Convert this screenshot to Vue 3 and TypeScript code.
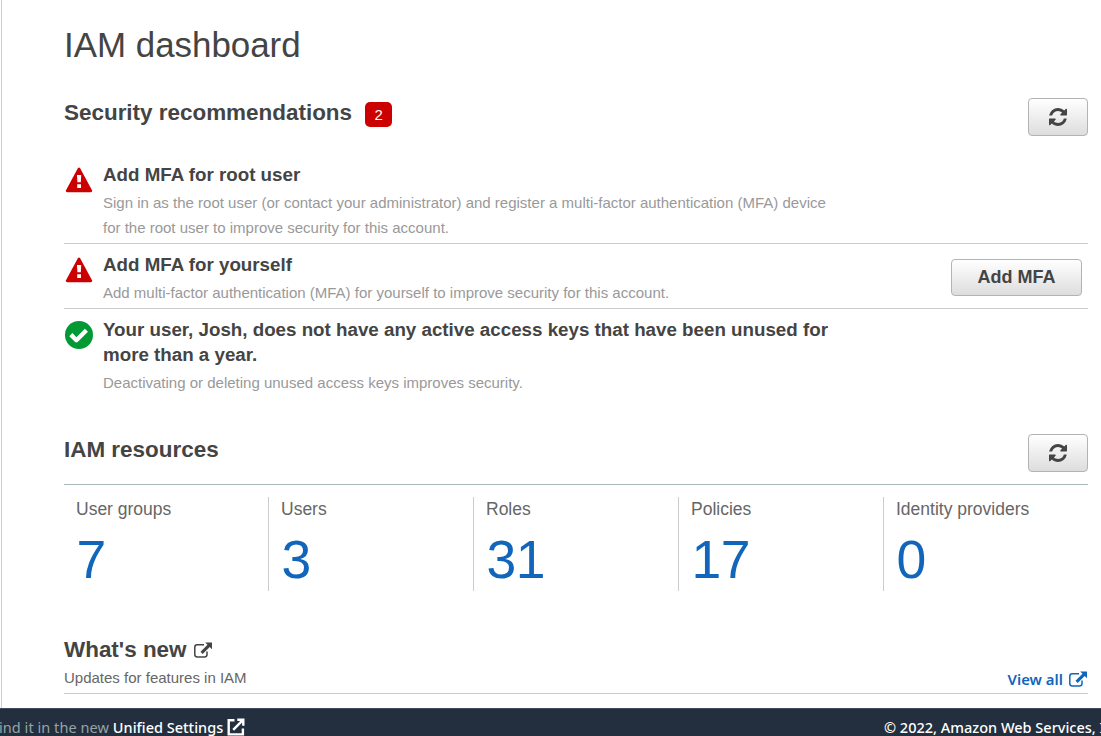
<script setup lang="ts">
interface Recommendation {
  status: 'alert' | 'ok'
  title: string
  description: string
  action?: string
}

interface Resource {
  label: string
  count: number
}

const recommendations: Recommendation[] = [
  {
    status: 'alert',
    title: 'Add MFA for root user',
    description:
      'Sign in as the root user (or contact your administrator) and register a multi-factor authentication (MFA) device for the root user to improve security for this account.',
  },
  {
    status: 'alert',
    title: 'Add MFA for yourself',
    description: 'Add multi-factor authentication (MFA) for yourself to improve security for this account.',
    action: 'Add MFA',
  },
  {
    status: 'ok',
    title: 'Your user, Josh, does not have any active access keys that have been unused for more than a year.',
    description: 'Deactivating or deleting unused access keys improves security.',
  },
]

const resources: Resource[] = [
  { label: 'User groups', count: 7 },
  { label: 'Users', count: 3 },
  { label: 'Roles', count: 31 },
  { label: 'Policies', count: 17 },
  { label: 'Identity providers', count: 0 },
]
</script>

<template>
  <div class="page">
    <main class="content">
      <h1 class="title">IAM dashboard</h1>

      <header class="section-head">
        <h2>Security recommendations</h2>
        <span class="count-badge">2</span>
        <button class="btn refresh" aria-label="Refresh">
          <svg viewBox="0 0 1536 1536" width="18" height="18">
            <path fill="#444" d="M1511 928q0 5-1 7-64 268-268 434.500T764 1536q-146 0-282.500-55T238 1324l-129 129q-19 19-45 19t-45-19-19-45V960q0-26 19-45t45-19h448q26 0 45 19t19 45-19 45l-137 137q71 66 161 102t187 36q134 0 250-65t186-179q11-17 53-117 8-23 30-23h192q13 0 22.500 9.500t9.500 22.500zm25-800v448q0 26-19 45t-45 19h-448q-26 0-45-19t-19-45 19-45l138-138Q969 256 768 256q-134 0-250 65T332 500q-11 17-53 117-8 23-30 23H50q-13 0-22.500-9.500T18 608v-7q65-268 270-434.500T768 0q146 0 284 55.500T1297 212l130-129q19-19 45-19t45 19 19 45z" />
          </svg>
        </button>
      </header>

      <ul class="recommendations">
        <li v-for="item in recommendations" :key="item.title" class="recommendation">
          <svg v-if="item.status === 'alert'" class="status" viewBox="0 0 30 30" width="30" height="30">
            <path fill="#cc0000" d="M13.700 3.400Q15 1.800 16.300 3.400L28 25.300Q28.600 27.300 26.500 27.300H3.500Q1.400 27.300 2 25.300Z" />
            <path fill="#fff" d="M13 10h4.200l-.4 7.200h-3.400zM13.200 19.300h3.800v3.700h-3.800z" />
          </svg>
          <svg v-else class="status" viewBox="0 0 30 30" width="30" height="30">
            <circle cx="15" cy="15" r="14" fill="#009933" />
            <path fill="none" stroke="#fff" stroke-width="4.400" stroke-linejoin="round" d="M6.800 14.600l5.600 5.600 10-10" />
          </svg>
          <div class="copy">
            <h3>{{ item.title }}</h3>
            <p>{{ item.description }}</p>
          </div>
          <button v-if="item.action" class="btn action">{{ item.action }}</button>
        </li>
      </ul>

      <header class="section-head resources-head">
        <h2>IAM resources</h2>
        <button class="btn refresh" aria-label="Refresh">
          <svg viewBox="0 0 1536 1536" width="18" height="18">
            <path fill="#444" d="M1511 928q0 5-1 7-64 268-268 434.500T764 1536q-146 0-282.500-55T238 1324l-129 129q-19 19-45 19t-45-19-19-45V960q0-26 19-45t45-19h448q26 0 45 19t19 45-19 45l-137 137q71 66 161 102t187 36q134 0 250-65t186-179q11-17 53-117 8-23 30-23h192q13 0 22.500 9.500t9.500 22.500zm25-800v448q0 26-19 45t-45 19h-448q-26 0-45-19t-19-45 19-45l138-138Q969 256 768 256q-134 0-250 65T332 500q-11 17-53 117-8 23-30 23H50q-13 0-22.500-9.500T18 608v-7q65-268 270-434.500T768 0q146 0 284 55.500T1297 212l130-129q19-19 45-19t45 19 19 45z" />
          </svg>
        </button>
      </header>

      <div class="resources">
        <div v-for="resource in resources" :key="resource.label" class="resource">
          <span class="resource-label">{{ resource.label }}</span>
          <a class="resource-count">{{ resource.count }}</a>
        </div>
      </div>

      <section class="news">
        <div>
          <h2 class="news-title">
            <span>What's new</span>
            <svg viewBox="0 0 18 16" width="18" height="16">
              <path fill="none" stroke="#444" stroke-width="1.500" d="M10 2.800H3.200Q.8 2.800.8 5.200v7.400Q.8 15 3.200 15h7.400Q13 15 13 12.600V9.500" />
              <path fill="#444" d="M11.200.4H18v6.800l-2.300-2.300-7 7-2.200-2.200 7-7z" />
            </svg>
          </h2>
          <p>Updates for features in IAM</p>
        </div>
        <a class="view-all">
          View all
          <svg viewBox="0 0 18 16" width="18" height="16">
            <path fill="none" stroke="#1166bb" stroke-width="1.500" d="M10 2.800H3.200Q.8 2.800.8 5.200v7.400Q.8 15 3.200 15h7.400Q13 15 13 12.600V9.500" />
            <path fill="#1166bb" d="M11.200.4H18v6.800l-2.300-2.300-7 7-2.200-2.200 7-7z" />
          </svg>
        </a>
      </section>
    </main>

    <footer class="footer">
      <div class="footer-note">
        <span>ind it in the new</span>
        <a>Unified Settings</a>
        <svg viewBox="0 0 18 18" width="18" height="18">
          <path fill="none" stroke="#fff" stroke-width="2.400" d="M7.500 2.200H1.700v14.200h14.200v-5.900M10.300 1.700h6v6M15.800 2.200L6.200 11.800" />
        </svg>
      </div>
      <div class="copyright">© 2022, Amazon Web Services, Inc.</div>
    </footer>
  </div>
</template>

<style>
html,
body {
  overflow: hidden;
}
</style>

<style scoped>
.page {
  display: flex;
  flex-direction: column;
  width: 100vw;
  height: 736px;
  overflow: hidden;
  background: #fff;
  color: #444;
  font-family: "Liberation Sans", Arial, sans-serif;
}

h1,
h2,
h3,
p,
ul {
  margin: 0;
  padding: 0;
}

.content {
  box-sizing: border-box;
  flex: none;
  height: 708px;
  margin-left: 1px;
  padding: 25px 13px 0 62px;
  border-left: 1px solid #c8d0d0;
}

.title {
  font-size: 34.900px;
  font-weight: 400;
  line-height: 40px;
}

h2 {
  font-size: 22.450px;
  font-weight: 700;
  line-height: 28px;
}

.section-head {
  display: flex;
  align-items: flex-start;
  height: 56px;
  margin-top: 33px;
}

.section-head h2 {
  padding-top: 1px;
}

.count-badge {
  width: 27px;
  height: 25px;
  margin: 4px 0 0 13px;
  border-radius: 5px;
  background: #cc0000;
  color: #fff;
  font-size: 15px;
  line-height: 25px;
  text-align: center;
}

.btn {
  display: flex;
  align-items: center;
  justify-content: center;
  box-sizing: border-box;
  padding: 0;
  border: 1px solid #b3b3b3;
  border-radius: 4px;
  background: linear-gradient(#fff, #ddd);
  color: #444;
  font: 700 18px "Liberation Sans", Arial, sans-serif;
}

.refresh {
  width: 60px;
  height: 38px;
  margin-left: auto;
}

.recommendations {
  list-style: none;
}

.recommendation {
  display: flex;
  align-items: flex-start;
  padding: 8px 6px 3px 0;
  border-bottom: 1px solid #ccc;
}

.recommendation:last-child {
  border-bottom: 0;
}

.status {
  flex: none;
  margin: 3px 9px 0 0;
}

.copy {
  width: 730px;
}

h3 {
  font-size: 18.750px;
  line-height: 25px;
}

.copy p {
  margin-top: 3px;
  color: #999;
  font-size: 15px;
  line-height: 25px;
}

.action {
  width: 131px;
  height: 37px;
  margin: 7px 0 0 auto;
}

.resources-head {
  height: 50px;
  margin-top: 36px;
  border-bottom: 1px solid #aab7b8;
}

.resources-head h2 {
  padding-top: 2px;
}

.resources {
  display: grid;
  grid-template-columns: repeat(5, 205px);
  margin-top: 12px;
}

.resource {
  display: flex;
  flex-direction: column;
  box-sizing: border-box;
  height: 94px;
  padding-left: 12px;
  border-right: 1px solid #ccc;
}

.resource:last-child {
  border-right: 0;
}

.resource-label {
  color: #666;
  font-size: 17.500px;
  line-height: 24px;
}

.resource-count {
  margin-top: 8px;
  padding-left: .5px;
  color: #1166bb;
  font-size: 53.500px;
  letter-spacing: -.5px;
  line-height: 62px;
}

.news {
  display: flex;
  align-items: flex-end;
  justify-content: space-between;
  height: 58px;
  margin-top: 44px;
  border-bottom: 1px solid #ccc;
}

.news p {
  padding-bottom: 3px;
  color: #666;
  font-size: 15px;
  line-height: 25px;
}

.news-title {
  display: flex;
  align-items: center;
  gap: 7px;
  line-height: 30px;
}

.view-all {
  display: flex;
  align-items: center;
  gap: 6px;
  height: 26px;
  margin: 0 1px 1px 0;
  color: #1166bb;
  font: 600 14.900px "Noto Sans", sans-serif;
}

.footer {
  display: flex;
  align-items: center;
  justify-content: space-between;
  box-sizing: border-box;
  height: 28px;
  padding-top: 8px;
  border-top: 1px solid #414d5c;
  background: #232f3e;
  color: #fff;
  font: 500 14.500px "Noto Sans", sans-serif;
  white-space: nowrap;
}

.footer-note {
  display: flex;
  align-items: center;
  gap: 4px;
  margin-left: -1px;
}

.footer-note span {
  color: #95a5a6;
  font-weight: 400;
  letter-spacing: .05px;
}

.copyright {
  width: 217px;
}
</style>
